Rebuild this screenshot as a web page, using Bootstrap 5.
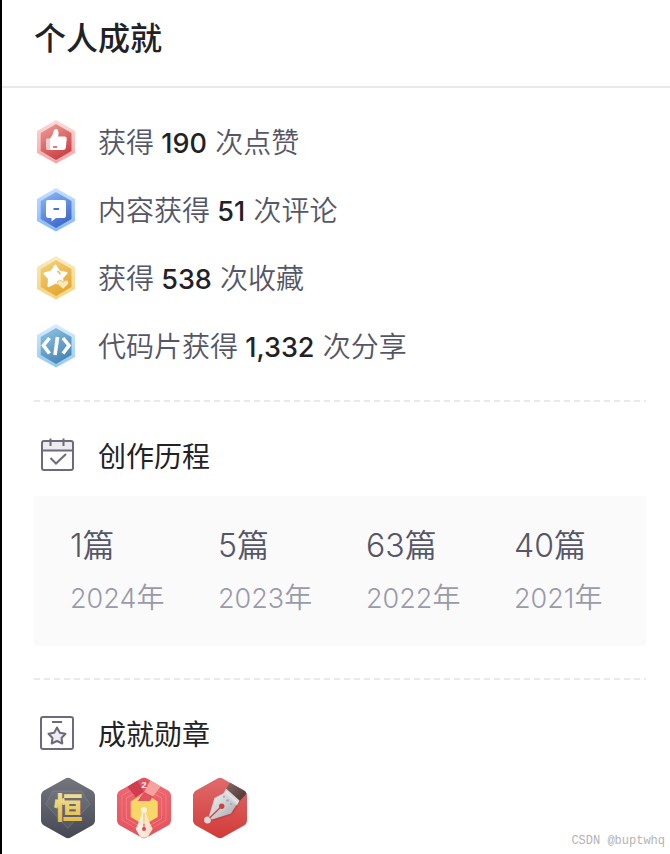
<!DOCTYPE html>
<html lang="zh-CN">
<head>
<meta charset="utf-8">
<meta name="viewport" content="width=device-width, initial-scale=1">
<title>个人成就</title>
<link href="https://cdn.jsdelivr.net/npm/bootstrap@5.3.0/dist/css/bootstrap.min.css" rel="stylesheet">
<style>
body{font-family:"Noto Sans CJK SC",sans-serif;color:#222226;background:#fff;font-size:28px;line-height:44px}
.panel{border-left:2px solid #000;min-height:100vh}
.panel-head{border-bottom:2px solid #e8e8ed;padding:14px 32px 28px}
.panel-head h1{font-size:32px;line-height:44px;font-weight:500;margin:0}
.panel-body{padding:32px 24px 0 32px}
.stat{color:#555666;gap:20px;height:44px;font-weight:350}
.stats{gap:24px;margin-bottom:32px}
.num{font-family:Inter,sans-serif;font-size:27px;font-weight:500;color:#222226;margin:0 2px 0 1px}
.icon44{width:44px;height:44px;flex:none}
.dash{height:2px;background:repeating-linear-gradient(90deg,#e8e8ed 0 6px,transparent 6px 10px)}
.sec{gap:20px;height:44px;margin:31px 0 19px}
.sec h2{font-size:28px;line-height:44px;font-weight:400;margin:0}
.years{background:#fafafb;padding:22px 0 22px 36px;grid-template-columns:repeat(4,1fr);column-gap:16px;margin-bottom:32px}
.cnt{color:#555666;font-size:32px;line-height:50px;font-weight:350}
.yr{color:#999aaa;font-size:28px;line-height:50px;font-weight:350}
.dg{font-family:Inter,sans-serif;font-weight:300}
.yr .dg{font-size:27px}
.medals{gap:16px;padding:2px 0 0 4px}
.medals svg{width:60px;height:64px}
.mark-text{right:5px;bottom:3px;font:12px/20px "Liberation Mono",monospace;color:#b4b4b4}
</style>
<script src="https://cdn.jsdelivr.net/npm/bootstrap@5.3.0/dist/js/bootstrap.bundle.min.js"></script>
</head>
<body>
<svg width="0" height="0" class="position-absolute" aria-hidden="true">
<defs>
<linearGradient id="r1" x2="0" y2="1"><stop stop-color="#f9dcda"/><stop offset="1" stop-color="#f5a5a5"/></linearGradient>
<linearGradient id="r2" x2=".5" y2="1"><stop stop-color="#f0a09a"/><stop offset="1" stop-color="#cb4347"/></linearGradient>
<linearGradient id="b1" x2="0" y2="1"><stop stop-color="#c6e0ff"/><stop offset="1" stop-color="#84b8fa"/></linearGradient>
<linearGradient id="b2" x2=".5" y2="1"><stop stop-color="#8dbcfa"/><stop offset="1" stop-color="#426bcb"/></linearGradient>
<linearGradient id="y1" x2="0" y2="1"><stop stop-color="#faebc3"/><stop offset="1" stop-color="#f5d47d"/></linearGradient>
<linearGradient id="y2" x2=".5" y2="1"><stop stop-color="#f5d582"/><stop offset="1" stop-color="#e5a733"/></linearGradient>
<linearGradient id="c1" x2="0" y2="1"><stop stop-color="#d8eefd"/><stop offset="1" stop-color="#91c9ef"/></linearGradient>
<linearGradient id="c2" x2=".5" y2="1"><stop stop-color="#94c5e5"/><stop offset="1" stop-color="#4b88b7"/></linearGradient>
<linearGradient id="d1" x2="0" y2="1"><stop stop-color="#74767e"/><stop offset="1" stop-color="#454854"/></linearGradient>
<linearGradient id="gold" x2="0" y2="1"><stop stop-color="#f9ebaa"/><stop offset="1" stop-color="#dfb43c"/></linearGradient>
<linearGradient id="m2" x2="0" y2="1"><stop stop-color="#ee6a74"/><stop offset="1" stop-color="#e6525c"/></linearGradient>
<linearGradient id="m3" x2="0" y2="1"><stop stop-color="#df6b6c"/><stop offset="1" stop-color="#d23b37"/></linearGradient>
<linearGradient id="steel" x2="1" y2="1"><stop stop-color="#f5f5f5"/><stop offset="1" stop-color="#a4a8ac"/></linearGradient>
<linearGradient id="cap" x2="1" y2="1"><stop stop-color="#8a6a66"/><stop offset="1" stop-color="#45302f"/></linearGradient>
<linearGradient id="cream" x2="1"><stop stop-color="#fff5e8"/><stop offset="1" stop-color="#f3dcc9"/></linearGradient>
<path id="hexo" d="M22 0 41 11V33L22 43.500 3 33V11Z"/>
<path id="hexi" d="M22 4 37.500 13V31L22 40 6.700 31V13Z"/>
<path id="mhex" d="M27 2.700Q30 1 33 2.700L54 14.500Q57 16.500 57 20V44Q57 47.500 54 49.500L33 61.300Q30 63 27 61.300L6 49.500Q3 47.500 3 44V20Q3 16.500 6 14.500Z"/>
<clipPath id="mclip"><use href="#mhex"/></clipPath>
</defs>
</svg>
<main class="panel position-relative">
<header class="panel-head"><h1>个人成就</h1></header>
<div class="panel-body">
<ul class="stats list-unstyled d-flex flex-column">
<li class="stat d-flex align-items-center">
<svg class="icon44" viewBox="0 0 44 44" aria-hidden="true"><use href="#hexo" fill="url(#r1)"/><use href="#hexi" fill="url(#r2)"/><path d="M12.500 18.500H16V30H13.500Q12 30 12 28V20Z" fill="#fff" opacity=".65"/><path d="M16 18.500Q19 15 19.700 11Q20.500 8.500 22.500 9Q25.500 10 24 16.500H31Q33 16.500 32.700 19L31.800 28Q31.500 30 29 30H16Z" fill="#fff"/><path d="M19 27h4" stroke="#d84c50" stroke-width="1.500"/></svg>
<span>获得 <b class="num">190</b> 次点赞</span></li>
<li class="stat d-flex align-items-center">
<svg class="icon44" viewBox="0 0 44 44" aria-hidden="true"><use href="#hexo" fill="url(#b1)"/><use href="#hexi" fill="url(#b2)"/><path d="M14 12H30Q32 12 32 14V27Q32 30 30 30H22L17.500 33.500V30H14.500Q12 30 12 27V14Q12 12 14 12Z" fill="#fff"/><path d="M19.500 21h5.500" stroke="#4972d5" stroke-width="2"/></svg>
<span>内容获得 <b class="num">51</b> 次评论</span></li>
<li class="stat d-flex align-items-center">
<svg class="icon44" viewBox="0 0 44 44" aria-hidden="true"><use href="#hexo" fill="url(#y1)"/><use href="#hexi" fill="url(#y2)"/><path d="M21.500 9.500 25 15.500 32.500 17 28 22 29 29 21.500 26.500 14.500 30 15 22.500 10.500 17.500 17.500 15.500Z" fill="#fff" stroke="#fff" stroke-width="2" stroke-linejoin="round"/><path d="M23 15.500q3 0 3 3" fill="none" stroke="#edbf59" stroke-width="1.500"/><path d="M29 33 24 28.500Q22.500 25 25.500 24.300 28 24 29 26.500 30 24 32.500 24.300 35.500 25 34 28.500Z" fill="#fceabd" stroke="#e9b348" stroke-width=".7"/></svg>
<span>获得 <b class="num">538</b> 次收藏</span></li>
<li class="stat d-flex align-items-center">
<svg class="icon44" viewBox="0 0 44 44" aria-hidden="true"><use href="#hexo" fill="url(#c1)"/><use href="#hexi" fill="url(#c2)"/><path d="M15.500 14 9.500 21.500 15.500 29.500M29 14l6 7.500-6 8M23.500 13 21 31" fill="none" stroke="#fff" stroke-width="3.600"/></svg>
<span>代码片获得 <b class="num">1,332</b> 次分享</span></li>
</ul>
<div class="dash"></div>
<section>
<div class="sec d-flex align-items-center">
<svg class="icon44" viewBox="0 0 44 44" fill="none" stroke="#6c6b7d" stroke-width="2" aria-hidden="true"><path d="M8 9H38V18H8Z" fill="#ececee" stroke="none"/><rect x="8" y="8" width="31" height="29" rx="2"/><path d="M8 17.500H39M16.500 5.500v7.500M29.500 5.500v7.500M16.500 25l5.500 5.500L32 21"/></svg>
<h2>创作历程</h2></div>
<div class="years d-grid">
<div><div class="cnt"><span class="dg">1</span>篇</div><div class="yr"><span class="dg">2024</span>年</div></div>
<div><div class="cnt"><span class="dg">5</span>篇</div><div class="yr"><span class="dg">2023</span>年</div></div>
<div><div class="cnt"><span class="dg">63</span>篇</div><div class="yr"><span class="dg">2022</span>年</div></div>
<div><div class="cnt"><span class="dg">40</span>篇</div><div class="yr"><span class="dg">2021</span>年</div></div>
</div>
</section>
<div class="dash"></div>
<section>
<div class="sec d-flex align-items-center">
<svg class="icon44" viewBox="0 0 44 44" fill="none" stroke="#6c6b7d" stroke-width="2" aria-hidden="true"><rect x="7" y="6" width="32" height="32" rx="2"/><path d="M18 11H28"/><path d="M23 16.500 25.800 21.700 31.500 22.700 27.500 27 28.300 32.500 23 30 17.700 32.500 18.500 27 14.500 22.700 20.200 21.700Z" fill="#ececee" stroke-linejoin="round"/></svg>
<h2>成就勋章</h2></div>
<div class="medals d-flex">
<svg viewBox="0 0 60 64" role="img" aria-label="恒"><use href="#mhex" fill="url(#d1)"/><path d="M14.700 15H43.700L52 28.300 29.700 52.300 7.700 28.300Z" fill="#fff" fill-opacity=".05" stroke="#9a9ca4" stroke-opacity=".4" stroke-width=".8"/><text x="30" y="43" text-anchor="middle" font-size="29" font-weight="900" fill="url(#gold)">恒</text></svg>
<svg viewBox="0 0 60 64" role="img" aria-label="2"><use href="#mhex" fill="url(#m2)"/><g fill="none" stroke="#f68c92" stroke-width=".9"><path d="M30 7 52 19.500V44L30 57 8 44V19.500Z" opacity=".6"/><path d="M30 12 47.700 22V42.500L30 53 12.300 42.500V22Z" opacity=".8"/></g><path d="M30 17 43.700 25.500V41L30 49 16.700 41V25.500Z" fill="#f7d768"/><g clip-path="url(#mclip)"><path d="M20 6 30 0 42 7 35 17H27Z" fill="#e4525f"/><path d="M13.500 11 22.700 3.700 30 16 22 21.500Z" fill="#cf3e4e"/><path d="M37 3 47.500 9.500 39 20.500 30 16Z" fill="#f5a39d"/><path d="M22 21.500 30 16 28 21Z" fill="#f5a39d"/><path d="M23.700 25 30 16 39 20.500 36 25Z" fill="#e4525f"/></g><text x="30" y="12" text-anchor="middle" font-family="Liberation Sans" font-size="9" font-weight="700" fill="#fff">2</text><path d="M28 36.500Q26.500 43 21.700 53L26 60.500Q30 63 34 60.500L38.700 53Q33.500 43 32 36.500Z" fill="url(#cream)"/><path d="M30 37V49" stroke="#efd083" stroke-width="1.500"/><path d="M30 48v4" stroke="#d94b50"/><circle cx="30" cy="34" r="3" fill="#fff0df"/><circle cx="30" cy="53" r="2" fill="#d94b50"/></svg>
<svg viewBox="0 0 60 64" aria-hidden="true"><use href="#mhex" fill="url(#m3)"/><g clip-path="url(#mclip)"><path d="M41 5 58 16 49.300 25.500 36 13Z" fill="url(#cap)"/></g><path d="M35.500 13 49.300 24.500 46.500 30.500 41 38 22.500 44 19 40.500 24.500 22 33 17.500Z" fill="#8f1e20" opacity=".2" transform="translate(1 1)"/><path d="M34 17 24.500 22 19 40 22 43.500 41 37.500 46.500 28.500Z" fill="url(#steel)"/><path d="M36 12.500 49.500 24.500 47 29.500 33.500 17.500Z" fill="#d9dadc"/><path d="M35 15 48 27" stroke="#f3f3f3" stroke-width=".8"/><circle cx="17.500" cy="44" r="3.400" fill="#d8dadc"/><path d="M31.700 30.300 19.500 42" stroke="#c84443" stroke-width="1.200"/><circle cx="31.700" cy="30.300" r="2.700" fill="#c84443"/><g fill="#a7a9ad"><circle cx="34" cy="20.700" r="1.100"/><circle cx="37.500" cy="24.500" r="1.300"/><circle cx="41" cy="28" r="1.100"/></g></svg>
</div>
</section>
</div>
<div class="mark-text position-absolute">CSDN @buptwhq</div>
</main>
</body>
</html>
